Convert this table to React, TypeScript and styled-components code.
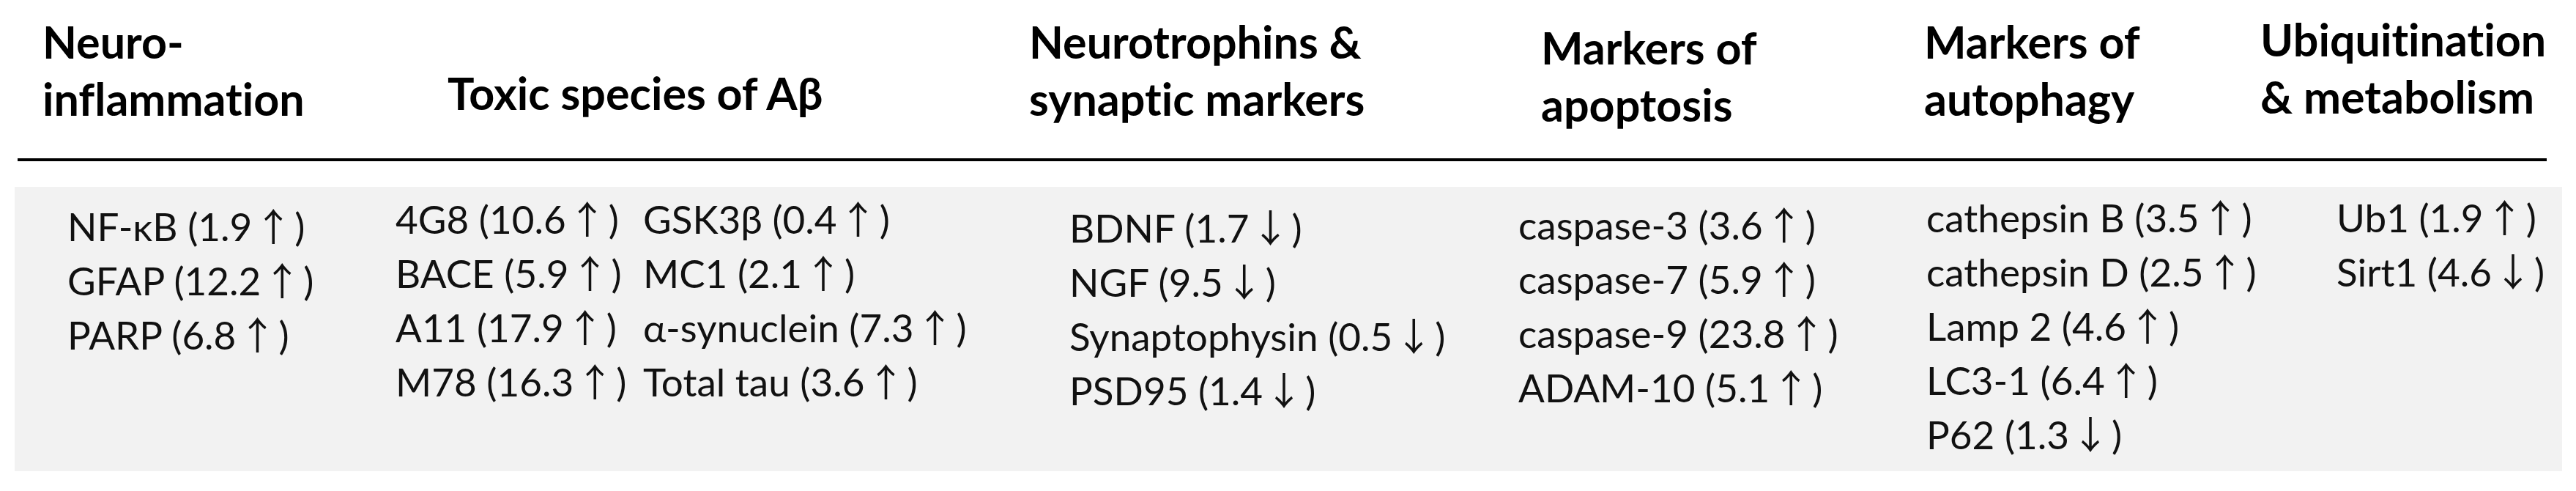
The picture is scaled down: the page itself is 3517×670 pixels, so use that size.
import React from 'react';
import styled, { createGlobalStyle } from 'styled-components';

type Dir = 'up' | 'down';

interface Marker {
  name: string;
  value: string;
  dir: Dir;
}

interface BodyColumn {
  top: number;
  items: Marker[];
}

const up = (name: string, value: string): Marker => ({ name, value, dir: 'up' });
const down = (name: string, value: string): Marker => ({ name, value, dir: 'down' });

const headers: { lines: string[]; top: number }[] = [
  { lines: ['Neuro-', 'inflammation'], top: 18 },
  { lines: ['Toxic species of Aβ'], top: 88 },
  { lines: ['Neurotrophins &', 'synaptic markers'], top: 18 },
  { lines: ['Markers of', 'apoptosis'], top: 26 },
  { lines: ['Markers of', 'autophagy'], top: 18 },
  { lines: ['Ubiquitination', '& metabolism'], top: 15 },
];

const columns: BodyColumn[] = [
  { top: 17, items: [up('NF-κB', '1.9'), up('GFAP', '12.2'), up('PARP', '6.8')] },
  { top: 7, items: [up('4G8', '10.6'), up('BACE', '5.9'), up('A11', '17.9'), up('M78', '16.3')] },
  {
    top: 7,
    items: [up('GSK3β', '0.4'), up('MC1', '2.1'), up('α-synuclein', '7.3'), up('Total tau', '3.6')],
  },
  {
    top: 19,
    items: [down('BDNF', '1.7'), down('NGF', '9.5'), down('Synaptophysin', '0.5'), down('PSD95', '1.4')],
  },
  {
    top: 15,
    items: [up('caspase-3', '3.6'), up('caspase-7', '5.9'), up('caspase-9', '23.8'), up('ADAM-10', '5.1')],
  },
  {
    top: 5,
    items: [
      up('cathepsin B', '3.5'),
      up('cathepsin D', '2.5'),
      up('Lamp 2', '4.6'),
      up('LC3-1', '6.4'),
      down('P62', '1.3'),
    ],
  },
  { top: 5, items: [up('Ub1', '1.9'), down('Sirt1', '4.6')] },
];

export default function App() {
  return (
    <>
      <GlobalStyle />
      <Page>
        <HeaderRow>
          {headers.map((h, i) => (
            <HeaderCell key={i} $top={h.top}>
              {h.lines.map((line) => (
                <div key={line}>{line}</div>
              ))}
            </HeaderCell>
          ))}
        </HeaderRow>
        <Rule />
        <Panel>
          {columns.map((col, i) => (
            <BodyCol key={i} $top={col.top}>
              {col.items.map((m) => (
                <Item key={m.name}>
                  {m.name} ({m.value}
                  <Arrow>{m.dir === 'up' ? '↑' : '↓'}</Arrow>)
                </Item>
              ))}
            </BodyCol>
          ))}
        </Panel>
      </Page>
    </>
  );
}

const GlobalStyle = createGlobalStyle`
  html, body {
    margin: 0;
    padding: 0;
    background: #ffffff;
  }
  body {
    font-family: 'Lato', 'Liberation Sans', sans-serif;
    font-variant-ligatures: none;
    color: #111111;
  }
`;

const Page = styled.div`
  width: 3517px;
  height: 670px;
  background: #ffffff;
  overflow: hidden;
`;

const HeaderRow = styled.div`
  display: grid;
  grid-template-columns: 553px 794px 699px 523px 459px 1fr;
  height: 216px;
  padding-left: 58px;
  box-sizing: border-box;
  font-weight: 700;
  font-size: 61px;
  line-height: 78px;
  color: #000000;
  white-space: nowrap;
`;

const HeaderCell = styled.div<{ $top: number }>`
  padding-top: ${(p) => p.$top}px;
`;

const Rule = styled.div`
  margin-left: 24px;
  width: 3453px;
  height: 4px;
  background: #000000;
`;

const Panel = styled.div`
  display: grid;
  grid-template-columns: 448px 338px 582px 613px 557px 560px 1fr;
  margin: 35px 0 0 20px;
  width: 3478px;
  box-sizing: border-box;
  padding: 0 0 13px 72px;
  background: #f2f2f2;
  font-size: 53px;
  line-height: 74px;
  white-space: nowrap;
`;

const BodyCol = styled.div<{ $top: number }>`
  padding-top: ${(p) => p.$top}px;
`;

const Item = styled.div``;

const Arrow = styled.span`
  margin: 0 3px;
  font-family: 'Noto Sans CJK SC', 'DejaVu Sans', sans-serif;
  font-weight: 400;
  font-size: 52px;
  line-height: 52px;
`;
